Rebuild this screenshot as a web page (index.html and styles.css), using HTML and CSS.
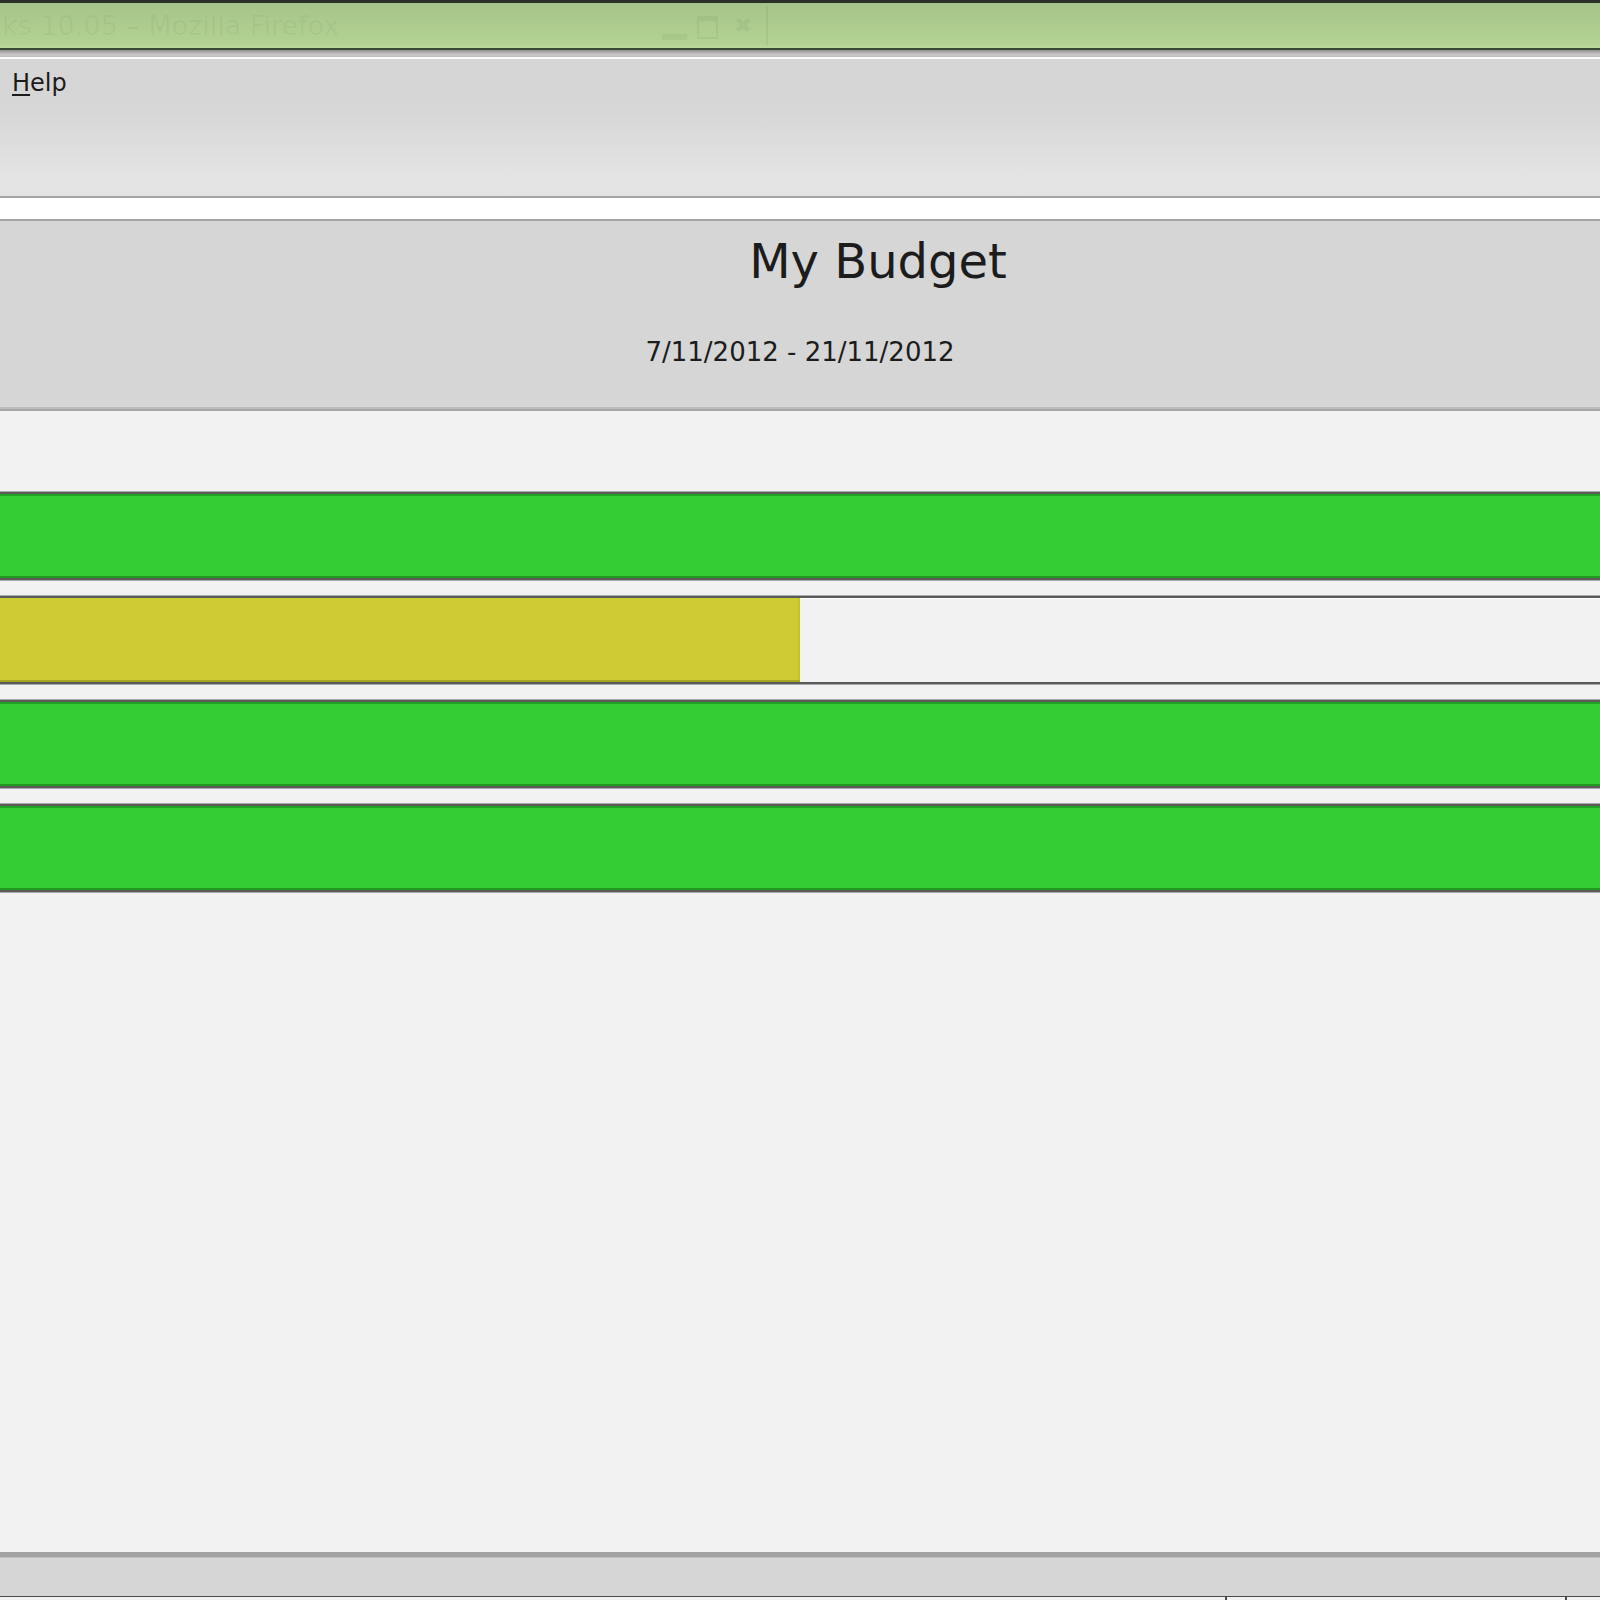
FILE: index.html
```html
<!DOCTYPE html>
<html>
<head>
<meta charset="utf-8">
<title>My Budget</title>
<link rel="stylesheet" href="styles.css">
</head>
<body>
<div class="window">
  <div class="titlebar">
    <div class="wintitle"><span>ks 10.05 – Mozilla Firefox</span></div>
    <div class="winbtns">
      <span class="btn-min"></span>
      <span class="btn-max"></span>
      <span class="btn-close">✖</span>
      <span class="btn-sep"></span>
    </div>
  </div>
  <div class="titlesep"></div>
  <div class="menubar">
    <span class="menuitem"><span class="mnemonic">H</span>elp</span>
  </div>
  <div class="whiteband"></div>
  <div class="header">
    <div class="title">My Budget</div>
    <div class="period">7/11/2012 - 21/11/2012</div>
  </div>
  <div class="content">
    <div class="bar"><div class="fill ok" style="width:100%"></div></div>
    <div class="bar"><div class="fill warn" style="width:50%"></div></div>
    <div class="bar"><div class="fill ok" style="width:100%"></div></div>
    <div class="bar"><div class="fill ok" style="width:100%"></div></div>
  </div>
  <div class="statusbar"></div>
  <div class="statusbottom">
    <div class="seg seg1"></div>
    <div class="seg seg2"></div>
    <div class="seg seg3"></div>
  </div>
</div>
</body>
</html>
```

FILE: styles.css
```css
html, body {
  margin: 0;
  padding: 0;
  background: #f2f2f2;
}
body {
  font-family: "DejaVu Sans", "Liberation Sans", sans-serif;
  color: #1c1c1c;
}
.window {
  width: 1600px;
  height: 1600px;
  display: flex;
  flex-direction: column;
  overflow: hidden;
}
.titlebar {
  height: 45px;
  flex: none;
  display: flex;
  align-items: stretch;
  border-top: 3px solid #2a2f28;
  border-bottom: 2px solid #3b4a33;
  background: linear-gradient(#a6c488, #b2d293 90%, #bcd99e);
}
.wintitle {
  width: 662px;
  flex: none;
  overflow: hidden;
  white-space: nowrap;
  display: flex;
  align-items: center;
}
.wintitle span {
  margin-left: 2px;
  font-size: 27px;
  color: rgba(60, 90, 40, 0.06);
}
.winbtns {
  display: flex;
  align-items: center;
  gap: 10px;
}
.btn-min {
  width: 25px;
  height: 6px;
  margin-top: 22px;
  background: rgba(80, 110, 60, 0.08);
}
.btn-max {
  width: 17px;
  height: 16px;
  border: 2px solid rgba(80, 110, 60, 0.09);
  border-top-width: 5px;
  margin-top: 3px;
}
.btn-close {
  font-size: 22px;
  line-height: 1;
  margin-left: 6px;
  color: rgba(80, 110, 60, 0.1);
}
.btn-sep {
  width: 2px;
  height: 40px;
  margin-left: 4px;
  background: rgba(80, 110, 60, 0.09);
}
.titlesep {
  height: 7px;
  flex: none;
  background: linear-gradient(#8f8f8f, #b5b5b5 40%, #c9c9c9 70%, #bdbdbd);
  border-bottom: 2px solid #fbfbfb;
}
.menubar {
  height: 127px;
  flex: none;
  padding: 10px 0 0 12px;
  background: linear-gradient(#d6d6d6 0%, #d6d6d6 35%, #e5e5e5 90%, #e3e3e3 100%);
  border-bottom: 2px solid #a4a4a4;
}
.menuitem {
  font-size: 24px;
  line-height: 28px;
  display: inline-block;
}
.mnemonic {
  text-decoration: underline;
  text-underline-offset: 3px;
  text-decoration-thickness: 2px;
}
.whiteband {
  height: 21px;
  flex: none;
  background: #ffffff;
  border-bottom: 2px solid #a4a4a4;
}
.header {
  height: 186px;
  flex: none;
  background: #d6d6d6;
  border-bottom: 2px solid #bdbdbd;
  box-shadow: 0 2px 0 #a6a6a6;
  margin-bottom: 2px;
}
.title {
  font-size: 48px;
  line-height: 56px;
  padding-top: 12px;
  padding-left: 156px;
  text-align: center;
}
.period {
  font-size: 26px;
  line-height: 30px;
  margin-top: 48px;
  text-align: center;
}
.content {
  flex: 1;
  background: #f2f2f2;
  padding-top: 81px;
  display: flex;
  flex-direction: column;
  gap: 16px;
}
.bar {
  height: 84px;
  flex: none;
  display: flex;
  background: #f2f2f2;
  border-top: 2px solid #5a5a5a;
  border-bottom: 2px solid #5a5a5a;
  box-shadow: 0 -1px 0 #a9a9a9, 0 1px 0 #a9a9a9, inset 0 1px 0 #ffffff;
}
.fill {
  height: 100%;
}
.fill.ok {
  background: #33cc33;
  box-shadow: inset 0 2px 0 #22a022, inset 0 -2px 0 #1f9a1f;
}
.fill.warn {
  background: #cccc33;
  box-shadow: inset 0 -2px 0 #a6a620, inset -2px 0 0 #c2c22c;
}
.statusbar {
  height: 39px;
  flex: none;
  background: #d6d6d6;
  border-top: 5px solid #a2a2a2;
  box-shadow: inset 0 1px 0 #bcbcbc;
}
.statusbottom {
  height: 3px;
  flex: none;
  display: flex;
  border-top: 1px solid #4a4a4a;
  background: #f2f2f2;
}
.seg1 {
  width: 1225px;
}
.seg2 {
  width: 338px;
  border-left: 2px solid #4a4a4a;
}
.seg3 {
  flex: 1;
  border-left: 2px solid #4a4a4a;
}
```
